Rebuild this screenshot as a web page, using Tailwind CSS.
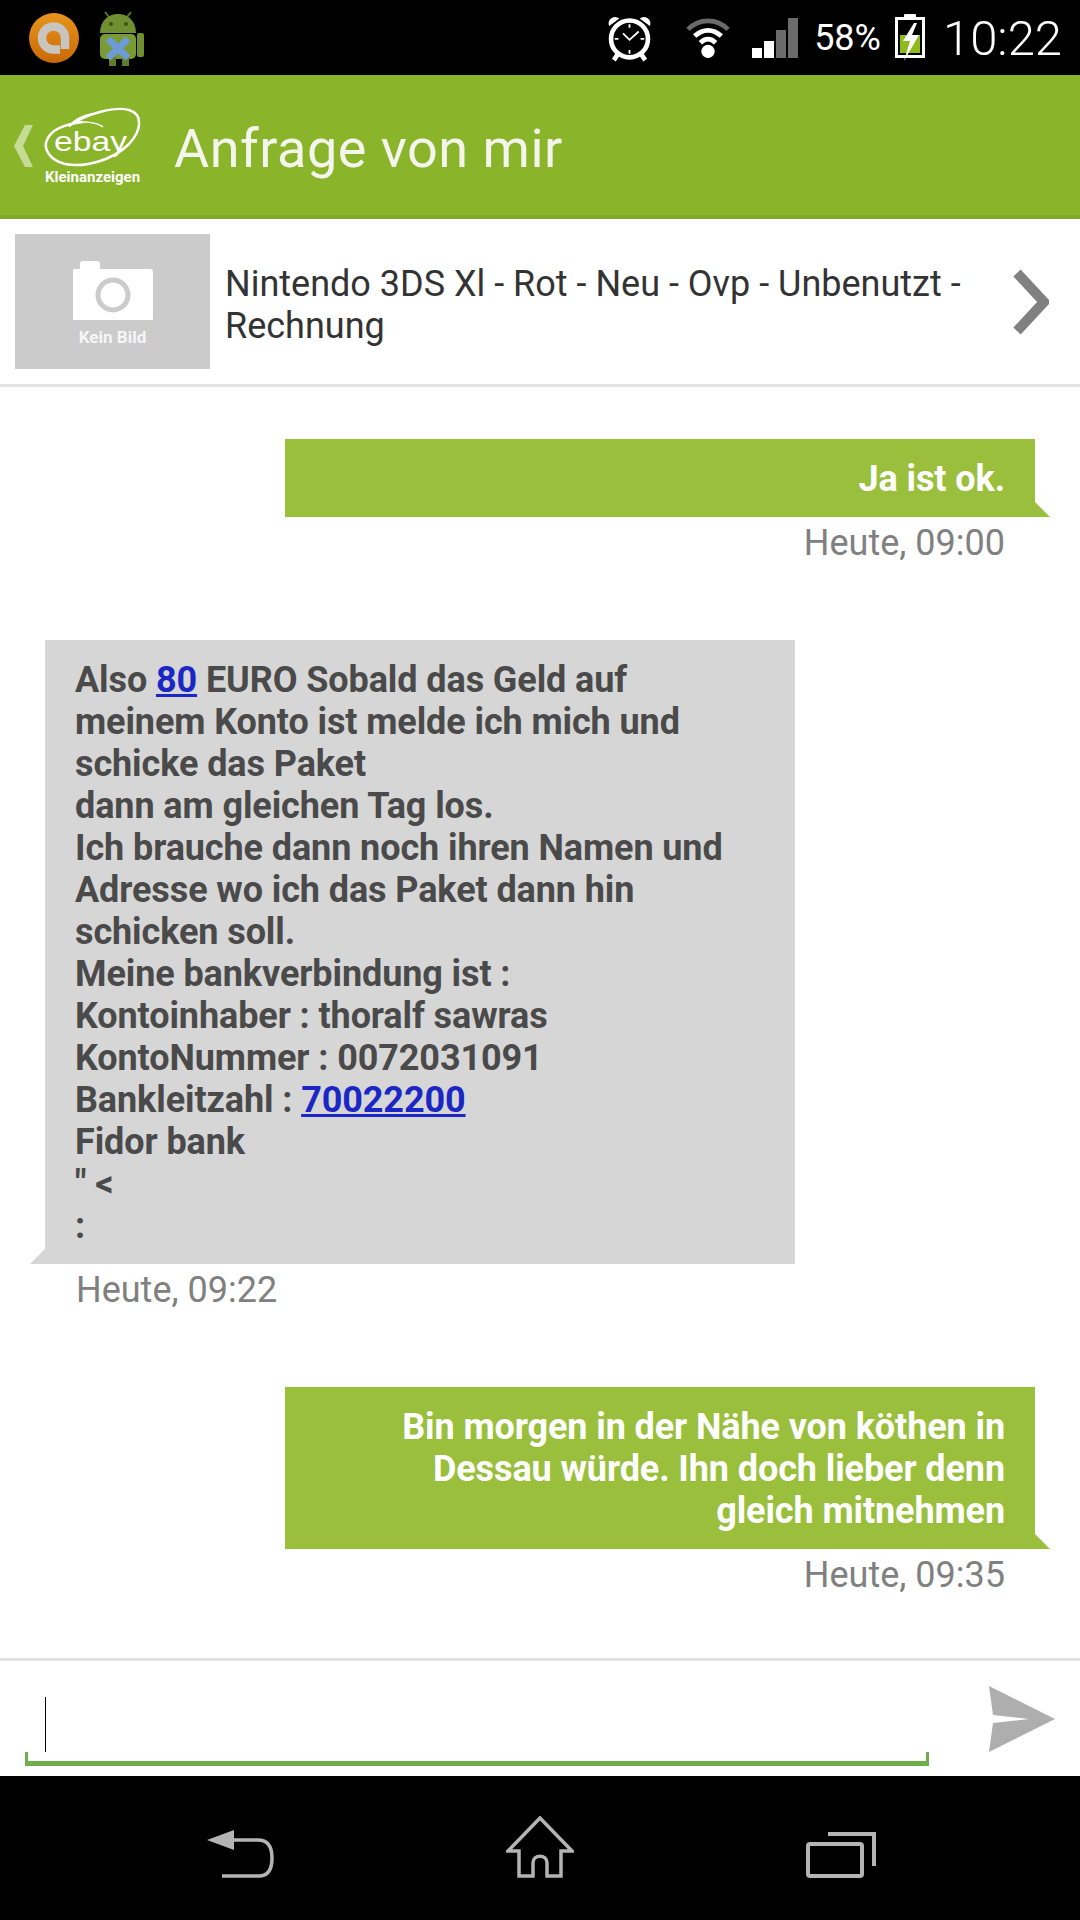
<!DOCTYPE html>
<html><head><meta charset="utf-8">
<script src="https://cdn.jsdelivr.net/npm/@tailwindcss/browser@4"></script>
</head>
<body class="m-0 bg-white">
<div class="w-[1080px] h-[1920px] flex flex-col overflow-hidden font-['Roboto',sans-serif] bg-white">
  <!-- status bar -->
  <div class="h-[75px] bg-black flex items-center shrink-0 relative">
    <svg class="ml-[29px] shrink-0" width="50" height="50" viewBox="0 0 50 50">
      <defs><linearGradient id="o" x1="0" y1="0" x2="0" y2="1"><stop offset="0" stop-color="#e8941e"/><stop offset="1" stop-color="#c96a04"/></linearGradient></defs>
      <circle cx="25" cy="25" r="25" fill="url(#o)"/>
      <path d="M36 36V25a11.500 11.500 0 1 0-11.500 11.500H31" fill="none" stroke="#c8c4bf" stroke-width="8.500"/>
    </svg>
    <svg class="ml-[20px] shrink-0" width="46" height="58" viewBox="0 0 46 58">
      <path d="M6 3l4 5M32 3l-4 5" stroke="#5f7a2a" stroke-width="2"/>
      <path d="M1 24C1 12 9 5 19 5s18 7 18 19z" fill="#6f8f30"/>
      <rect x="1" y="25" width="36" height="25" rx="5" fill="#7a9a35"/>
      <rect x="10" y="48" width="7" height="9" fill="#5f7d28"/><rect x="23" y="48" width="7" height="9" fill="#5f7d28"/>
      <rect x="38" y="24" width="7" height="24" rx="2" fill="#6f8f30"/>
      <circle cx="12" cy="15" r="2" fill="#3f5218"/><circle cx="27" cy="15" r="2" fill="#3f5218"/>
      <path d="M9 30l20 19M29 30L9 49" stroke="#6d9bd8" stroke-width="7"/>
    </svg>
    <div class="ml-auto flex items-center h-full">
      <svg class="shrink-0 mr-[32px]" width="47" height="48" viewBox="0 0 50 52">
        <path d="M3 13a7 7 0 0 1 11-8zM47 13a7 7 0 0 0-11-8z" fill="#fff"/>
        <path d="M12 44l-4 6M38 44l4 6" stroke="#fff" stroke-width="5"/>
        <circle cx="25" cy="27" r="20" fill="none" stroke="#fff" stroke-width="5"/>
        <path d="M25 11v4M25 39v4M9 27h4M37 27h4M18 21l7 7 10-9" fill="none" stroke="#fff" stroke-width="2"/>
      </svg>
      <svg class="shrink-0 mr-[21px]" width="46" height="42" viewBox="0 0 48 44">
        <path d="M3 13C15 1 33 1 45 13" fill="none" stroke="#6a6a6a" stroke-width="5"/>
        <path d="M10 20c9-8 19-8 28 0M16 27c5-5 11-5 16 0" fill="none" stroke="#fff" stroke-width="5"/>
        <circle cx="24" cy="36" r="7" fill="#fff"/>
      </svg>
      <div class="flex items-end gap-[2px] h-[40px] mr-[16px]">
        <div class="w-[10px] h-[10px] bg-white"></div>
        <div class="w-[10px] h-[17px] bg-white"></div>
        <div class="w-[10px] h-[28px] bg-[#6b6b6b]"></div>
        <div class="w-[10px] h-[40px] bg-[#6b6b6b]"></div>
      </div>
      <span class="text-[36px] leading-none text-white mr-[14px]">58%</span>
      <svg class="shrink-0 mr-[18px]" width="30" height="48" viewBox="0 0 30 48">
        <rect x="9" y="0" width="12" height="5" rx="1" fill="#fff"/>
        <rect x="1.500" y="4.500" width="27" height="38" fill="#000" stroke="#fff" stroke-width="3"/>
        <rect x="5" y="21" width="20" height="18" fill="#8dbb1c"/>
        <path d="M19 9L8 27h7l-6 20 15-26h-7l5-12z" fill="#fff"/>
      </svg>
      <span class="text-[49px] leading-none font-light text-white mr-[18px] mt-[2px]">10:22</span>
    </div>
  </div>
  <!-- header -->
  <div class="h-[144px] bg-[#8ab42a] border-b-[4px] border-[#82aa27] flex items-center shrink-0">
    <svg class="ml-[13px] shrink-0 mt-[2px]" width="21" height="44" viewBox="0 0 21 44"><path d="M20 1H12L1 22l11 21h8L10 22z" fill="#c5db96"/></svg>
    <div class="ml-[11px] w-[98px] h-[82px] relative shrink-0 mt-[3px]">
      <svg class="absolute left-0 top-0 overflow-visible" width="96" height="64" viewBox="0 0 96 64">
        <path d="M24 20C40 8 70 0 84 4c14 4 13 20 0 34C68 54 40 62 20 58 4 54-2 42 2 34c4-10 18-16 36-18" fill="none" stroke="#fff" stroke-width="2.500"/>
        <path d="M24 21c4-7 12-11 22-13M28 17c10-2 24-1 30 4" fill="none" stroke="#fff" stroke-width="1.500"/>
        <text x="9" y="45" fill="#fff" font-family="Liberation Sans" font-size="28" textLength="73" lengthAdjust="spacingAndGlyphs">ebay</text>
      </svg>
      <span class="absolute left-0 top-[64px] text-[15px] leading-none font-bold text-white whitespace-nowrap">Kleinanzeigen</span>
    </div>
    <span class="ml-[31px] text-[54px] leading-none text-[#f4f6ee] tracking-[0.5px] mt-[8px]">Anfrage von mir</span>
  </div>
  <!-- item -->
  <div class="h-[168px] flex items-center shrink-0 border-b-[3px] border-[#e3e3e3] pl-[15px]">
    <div class="w-[195px] h-[135px] bg-[#cbcbcb] flex flex-col items-center shrink-0">
      <svg class="mt-[26px]" width="80" height="60" viewBox="0 0 80 60">
        <path d="M2 9h5V4a3 3 0 0 1 3-3h14a3 3 0 0 1 3 3v5h50a3 3 0 0 1 3 3v46a3 3 0 0 1-3 3H2a3 3 0 0 1-3-3V12a3 3 0 0 1 3-3z" fill="#fff"/>
        <circle cx="40" cy="35" r="15" fill="none" stroke="#cbcbcb" stroke-width="5"/>
      </svg>
      <span class="text-[17px] leading-none font-bold text-[#f6f6f6] mt-[9px]">Kein Bild</span>
    </div>
    <div class="ml-[15px] w-[760px] text-[36px] leading-[42px] text-[#333333] pt-[6px]">Nintendo 3DS Xl - Rot - Neu - Ovp - Unbenutzt - Rechnung</div>
    <svg class="ml-auto mr-[31px] shrink-0" width="36" height="66" viewBox="0 0 36 66"><path d="M4 4l27 29L4 62" fill="none" stroke="#808080" stroke-width="10"/></svg>
  </div>
  <!-- messages -->
  <div class="flex-1 flex flex-col relative">
    <div class="mt-[52px] ml-[285px] w-[750px] relative bg-[#99bf3d] px-[30px] pt-[19px] pb-[17px] text-right text-[36px] leading-[42px] font-bold tracking-[-0.1px] text-white">Ja ist ok.
      <svg class="absolute left-full bottom-0" width="15" height="15" viewBox="0 0 15 15"><path d="M0 0l15 15H0z" fill="#99bf3d"/></svg>
    </div>
    <div class="ml-[285px] w-[720px] text-right text-[36px] leading-[42px] text-[#808080] mt-[5px]">Heute, 09:00</div>

    <div class="mt-[76px] ml-[45px] w-[750px] relative bg-[#d6d6d6] px-[30px] pt-[19px] pb-[17px] text-[36px] leading-[42px] font-bold tracking-[-0.1px] text-[#4a4a4a]">
      Also <a class="text-[#1a27c5] underline">80</a> EURO Sobald das Geld auf<br>meinem Konto ist melde ich mich und<br>schicke das Paket<br>dann am gleichen Tag los.<br>Ich brauche dann noch ihren Namen und<br>Adresse wo ich das Paket dann hin<br>schicken soll.<br>Meine bankverbindung ist :<br>Kontoinhaber : thoralf sawras<br>KontoNummer : 0072031091<br>Bankleitzahl : <a class="text-[#1a27c5] underline">70022200</a><br>Fidor bank<br>" &lt;<br>:
      <svg class="absolute right-full bottom-0" width="15" height="15" viewBox="0 0 15 15"><path d="M15 0L0 15h15z" fill="#d6d6d6"/></svg>
    </div>
    <div class="ml-[76px] text-[36px] leading-[42px] text-[#808080] mt-[5px]">Heute, 09:22</div>

    <div class="mt-[76px] ml-[285px] w-[750px] relative bg-[#99bf3d] px-[30px] pt-[19px] pb-[17px] text-right text-[36px] leading-[42px] font-bold tracking-[-0.1px] text-white">Bin morgen in der Nähe von köthen in<br>Dessau würde. Ihn doch lieber denn<br>gleich mitnehmen
      <svg class="absolute left-full bottom-0" width="15" height="15" viewBox="0 0 15 15"><path d="M0 0l15 15H0z" fill="#99bf3d"/></svg>
    </div>
    <div class="ml-[285px] w-[720px] text-right text-[36px] leading-[42px] text-[#808080] mt-[5px]">Heute, 09:35</div>
  </div>
  <!-- input -->
  <div class="h-[118px] shrink-0 border-t-[3px] border-[#e3e3e3] relative">
    <div class="absolute left-[45px] top-[36px] w-px h-[55px] bg-black"></div>
    <div class="absolute left-[25px] top-[91px] w-[904px] h-[14px] border-l-[3px] border-r-[3px] border-b-[5px] border-[#6fae4a]"></div>
    <svg class="absolute left-[988px] top-[24px]" width="68" height="68" viewBox="0 0 68 68"><path d="M1 1l66 33L1 67l4-29 36-4-36-4z" fill="#aeaeae"/></svg>
  </div>
  <!-- nav -->
  <div class="h-[144px] shrink-0 bg-black flex items-start">
    <svg class="ml-[207px] mt-[54px] shrink-0" width="67" height="48" viewBox="0 0 67 48">
      <path d="M0 10L27 0v20z" fill="#b4b4b4"/>
      <path d="M25 10h26c9 0 14 5 14 18 0 13-5 18-13 18H15" fill="none" stroke="#b4b4b4" stroke-width="3.500"/>
    </svg>
    <svg class="ml-[232px] mt-[40px] shrink-0" width="68" height="62" viewBox="0 0 68 62">
      <path d="M34 2L2 35h11v25h14V47c0-9 14-9 14 0v13h14V35h11z" fill="none" stroke="#b4b4b4" stroke-width="3.500" stroke-linejoin="miter"/>
    </svg>
    <svg class="ml-[232px] mt-[56px] shrink-0" width="70" height="46" viewBox="0 0 70 46">
      <rect x="2" y="12" width="54" height="32" rx="2" fill="none" stroke="#b4b4b4" stroke-width="4"/>
      <path d="M22 2h46v32" fill="none" stroke="#b4b4b4" stroke-width="4"/>
    </svg>
  </div>
</div>
</body></html>
